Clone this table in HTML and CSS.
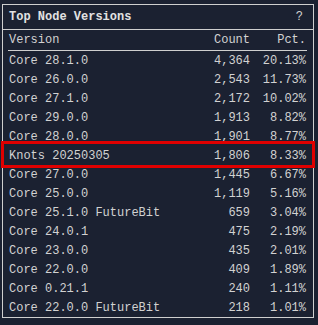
FILE: index.html
```html
<!DOCTYPE html>
<html>
<head>
<meta charset="utf-8">
<link rel="stylesheet" href="styles.css">
</head>
<body>
<div class="panel">
  <div class="title">
    <span class="title-text">Top Node Versions</span>
    <span class="help">?</span>
  </div>
  <div class="grid">
    <div class="row head"><span class="c-ver">Version</span><span class="c-num">Count</span><span class="c-pct">Pct.</span></div>
    <div class="row"><span class="c-ver">Core 28.1.0</span><span class="c-num">4,364</span><span class="c-pct">20.13%</span></div>
    <div class="row"><span class="c-ver">Core 26.0.0</span><span class="c-num">2,543</span><span class="c-pct">11.73%</span></div>
    <div class="row"><span class="c-ver">Core 27.1.0</span><span class="c-num">2,172</span><span class="c-pct">10.02%</span></div>
    <div class="row"><span class="c-ver">Core 29.0.0</span><span class="c-num">1,913</span><span class="c-pct">8.82%</span></div>
    <div class="row"><span class="c-ver">Core 28.0.0</span><span class="c-num">1,901</span><span class="c-pct">8.77%</span></div>
    <div class="row hl"><span class="c-ver">Knots 20250305</span><span class="c-num">1,806</span><span class="c-pct">8.33%</span></div>
    <div class="row"><span class="c-ver">Core 27.0.0</span><span class="c-num">1,445</span><span class="c-pct">6.67%</span></div>
    <div class="row"><span class="c-ver">Core 25.0.0</span><span class="c-num">1,119</span><span class="c-pct">5.16%</span></div>
    <div class="row"><span class="c-ver">Core 25.1.0 FutureBit</span><span class="c-num">659</span><span class="c-pct">3.04%</span></div>
    <div class="row"><span class="c-ver">Core 24.0.1</span><span class="c-num">475</span><span class="c-pct">2.19%</span></div>
    <div class="row"><span class="c-ver">Core 23.0.0</span><span class="c-num">435</span><span class="c-pct">2.01%</span></div>
    <div class="row"><span class="c-ver">Core 22.0.0</span><span class="c-num">409</span><span class="c-pct">1.89%</span></div>
    <div class="row"><span class="c-ver">Core 0.21.1</span><span class="c-num">240</span><span class="c-pct">1.11%</span></div>
    <div class="row"><span class="c-ver">Core 22.0.0 FutureBit</span><span class="c-num">218</span><span class="c-pct">1.01%</span></div>
  </div>
</div>
</body>
</html>
```
FILE: styles.css
```css
html, body {
  margin: 0;
  padding: 0;
  background: #1b2131;
}
body {
  font-family: "Liberation Mono", monospace;
  font-size: 12px;
  color: #d2d2d2;
  padding: 4px 0 0 2px;
}
.panel {
  width: 310px;
  border: 1px solid #cfcfcf;
  box-sizing: content-box;
}
.title {
  height: 24px;
  display: flex;
  align-items: center;
  justify-content: space-between;
  padding: 0 10px 0 6px;
  border-bottom: 1px solid #cfcfcf;
}
.title-text {
  font-weight: bold;
  color: #e2e2e2;
}
.help {
  color: #d2d2d2;
}
.grid {
  margin: 0 6px 0 5px;
}
.row {
  display: grid;
  grid-template-columns: 1fr auto 56px;
  height: 19px;
  align-items: center;
  white-space: pre;
}
.row.head {
  height: 20px;
  border-bottom: 1px solid #cfcfcf;
}
.c-ver {
  padding-left: 1px;
}
.c-num {
  text-align: right;
  padding-right: 1px;
}
.c-pct {
  text-align: right;
  padding-right: 1px;
}
.hl {
  position: relative;
}
.hl::after {
  content: "";
  position: absolute;
  top: -5px;
  bottom: -3px;
  left: -7px;
  right: -8px;
  border: 3px solid #e00000;
  pointer-events: none;
}
```
